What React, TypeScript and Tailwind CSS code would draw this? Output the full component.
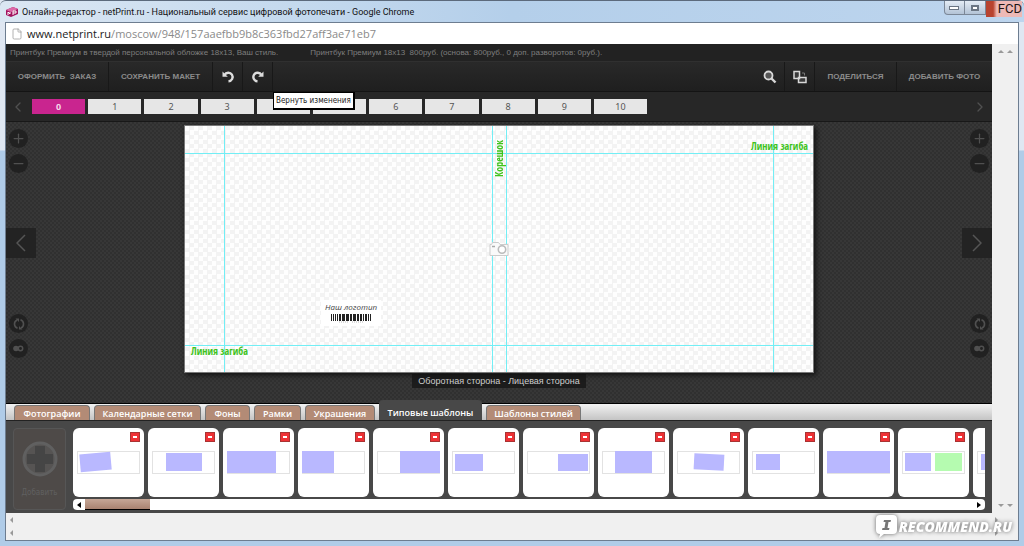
import { ChevronLeft, ChevronRight, Plus, Minus, File } from "lucide-react";
import clsx from "clsx";

const pages = Array.from({ length: 11 }, (_, i) => i);

const tabs = [
  { label: "Фотографии", width: "w-[76px]" },
  { label: "Календарные сетки", width: "w-[107px]" },
  { label: "Фоны", width: "w-[45px]" },
  { label: "Рамки", width: "w-[47px]" },
  { label: "Украшения", width: "w-[70px]" },
  { label: "Типовые шаблоны", width: "w-[103px]", active: true },
  { label: "Шаблоны стилей", width: "w-[95px]" },
];

type Block = { x: number; y: number; w: number; h: number; rotate?: number; color?: string };

const templates: Block[][] = [
  [{ x: 3, y: 2, w: 31, h: 18, rotate: -5 }],
  [{ x: 14, y: 2, w: 36, h: 18 }],
  [{ x: 0, y: 0, w: 49, h: 22 }],
  [{ x: 0, y: 0, w: 32, h: 22 }],
  [{ x: 23, y: 0, w: 40, h: 22 }],
  [{ x: 3, y: 3, w: 28, h: 17 }],
  [{ x: 31, y: 3, w: 30, h: 17 }],
  [{ x: 13, y: 0, w: 37, h: 22 }],
  [{ x: 17, y: 3, w: 30, h: 16, rotate: 3 }],
  [{ x: 4, y: 3, w: 24, h: 16 }],
  [{ x: 0, y: 0, w: 63, h: 22 }],
  [
    { x: 3, y: 2, w: 26, h: 18 },
    { x: 33, y: 2, w: 27, h: 18, color: "#b5fbb0" },
  ],
  [{ x: 4, y: 3, w: 26, h: 16 }],
];

function TitleBar() {
  return (
    <header className="flex h-[22px] items-center justify-between rounded-t-md border-t border-[#5c6a7c] bg-linear-to-r from-[#dbe7f3] via-[#b4cfea] to-[#bdd5ee] pl-1.5">
      <div className="flex items-center gap-1">
        <svg width="12" height="13" viewBox="0 0 12 13">
          <path d="M0 5 7 2l5 2v5l-7 3-5-2z" fill="#a3145f" />
          <path d="M0 5 7 2l5 2-7 3z" fill="#dd6aa8" />
          <path d="M2 10V7l2 2V7M7 10V6h3v2H7" stroke="#fff" strokeWidth="1" fill="none" />
        </svg>
        <h1 className="font-['Roboto',sans-serif] text-[9px] leading-4 whitespace-nowrap text-[#111]">
          Онлайн-редактор - netPrint.ru - Национальный сервис цифровой фотопечати - Google Chrome
        </h1>
      </div>
      <div className="flex h-full items-start pr-0.5">
        <button aria-label="Свернуть" className="flex h-3.5 w-[21px] items-center justify-center rounded-bl border border-t-0 border-[#7b8797] bg-linear-to-b from-[#e4ecf5] to-[#b3c3d6]">
          <span className="h-1 w-2.5 border border-[#6b7684] bg-white" />
        </button>
        <button aria-label="Развернуть" className="flex h-3.5 w-[21px] items-center justify-center border-r border-b border-[#7b8797] bg-linear-to-b from-[#e4ecf5] to-[#b3c3d6]">
          <span className="h-1.5 w-2 border-2 border-[#6b7684] bg-white" />
        </button>
        <button aria-label="Закрыть" className="flex h-4 items-start bg-linear-to-r from-[#b8432f] from-20% to-[#edb9b6] to-30% pl-3 font-['Roboto',sans-serif] text-[13px] leading-4 text-[#1c1414]">
          FCD
        </button>
      </div>
    </header>
  );
}

function UndoIcon({ flip = false }: { flip?: boolean }) {
  return (
    <svg width="14" height="14" viewBox="0 0 14 14" className={clsx(flip && "-scale-x-100")}>
      <path d="M3.500 5A4.300 4.300 0 1 1 7.500 11.300" stroke="#dcdcdc" strokeWidth="2.400" fill="none" />
      <path d="M1.500 1.500v5.300h5.300z" fill="#dcdcdc" />
    </svg>
  );
}

function ToolButton({ children, className, label }: { children: React.ReactNode; className?: string; label?: string }) {
  return (
    <button
      aria-label={label}
      className={clsx("flex h-full items-center justify-center border-[#181818] text-[8px] font-bold whitespace-pre text-[#8b8b8b]", className)}
    >
      {children}
    </button>
  );
}

function Toolbar() {
  return (
    <nav className="flex h-[31px] justify-between border-y border-t-[#303030] border-b-[#141414] bg-linear-to-b from-[#292929] to-[#1f1f1f]">
      <div className="flex">
        <ToolButton className="w-[103px] border-r">ОФОРМИТЬ  ЗАКАЗ</ToolButton>
        <ToolButton className="w-[104px] border-r">СОХРАНИТЬ МАКЕТ</ToolButton>
        <ToolButton label="Отменить изменения" className="w-[30px] border-r"><UndoIcon /></ToolButton>
        <div className="relative">
          <ToolButton label="Вернуть изменения" className="w-[30px] border-r"><UndoIcon flip /></ToolButton>
          <div role="tooltip" className="absolute top-[30px] left-[30px] z-20 border border-r-2 border-b-2 border-black bg-white px-0.5 font-['DejaVu_Sans_Condensed','DejaVu_Sans',sans-serif] text-[8px] leading-[15px] whitespace-nowrap text-[#222]">
            Вернуть изменения
          </div>
        </div>
      </div>
      <div className="flex">
        <ToolButton label="Поиск" className="w-[30px] border-r">
          <svg width="14" height="14" viewBox="0 0 14 14">
            <circle cx="5.500" cy="5.500" r="4" fill="#555" stroke="#d8d8d8" strokeWidth="1.800" />
            <path d="m8.500 8.500 4 4" stroke="#d8d8d8" strokeWidth="2.400" />
          </svg>
        </ToolButton>
        <ToolButton label="Размер" className="w-[30px] border-r">
          <svg width="14" height="14" viewBox="0 0 14 14" fill="#3a3a3a" stroke="#d8d8d8" strokeWidth="1.500">
            <path d="M1 1.500h5.500v7H1zM5.500 7.500h7.500v5H5.500z" />
            <path d="M9 3h2.500v2.500" fill="none" stroke="#777" strokeWidth="1" />
          </svg>
        </ToolButton>
        <ToolButton className="w-[82px] border-r">ПОДЕЛИТЬСЯ</ToolButton>
        <ToolButton className="w-[95px]">ДОБАВИТЬ ФОТО</ToolButton>
      </div>
    </nav>
  );
}

function PageStrip() {
  return (
    <div className="flex h-[30px] items-center justify-between border-b border-[#181818] bg-[#272727] px-1">
      <div className="flex flex-1 items-center gap-1.5">
        <button aria-label="Назад"><ChevronLeft size={16} color="#505050" strokeWidth={2} /></button>
        <div className="flex max-w-[615px] flex-1 gap-[3px]">
          {pages.map((page) => (
            <button
              key={page}
              className={clsx(
                "h-[15px] flex-1 font-['Noto_Sans',sans-serif] text-[9px] leading-[15px]",
                page === 0 ? "bg-[#c9258f] font-bold text-[#f5d5e9]" : "bg-[#e6e6e6] text-[#555]"
              )}
            >
              {page}
            </button>
          ))}
        </div>
      </div>
      <button aria-label="Вперёд"><ChevronRight size={16} color="#505050" strokeWidth={2} /></button>
    </div>
  );
}

const round = "flex size-[19px] items-center justify-center rounded-full bg-[#212121] text-[#505050]";

function SideControls({ side }: { side: "left" | "right" }) {
  const right = side === "right";
  return (
    <div className={clsx("flex w-[30px] flex-col pt-[7px] pb-[45px]", right ? "items-end" : "items-start")}>
      <div className={clsx("flex flex-col gap-1.5", right ? "pr-[3px]" : "pl-[3px]")}>
        <button aria-label="Увеличить" className={round}><Plus size={15} strokeWidth={2} /></button>
        <button aria-label="Уменьшить" className={round}><Minus size={15} strokeWidth={2} /></button>
      </div>
      <button aria-label={right ? "Следующий разворот" : "Предыдущий разворот"} className="mt-[55px] flex size-[30px] items-center justify-center bg-[#232323] text-[#555]">
        <svg width="10" height="18" viewBox="0 0 10 18" className={clsx(right && "-scale-x-100")}>
          <path d="M9 1 1 9l8 8" stroke="currentColor" strokeWidth="1.500" fill="none" />
        </svg>
      </button>
      <div className={clsx("mt-auto flex flex-col gap-1.5", right ? "pr-[3px]" : "pl-[3px]")}>
        <button aria-label="Повернуть" className={round}>
          <svg width="12" height="12" viewBox="0 0 12 12">
            <path d="M4.500 10.300A4.500 4.500 0 0 1 4 2M7.500 1.700A4.500 4.500 0 0 1 8 10" stroke="currentColor" strokeWidth="1.600" fill="none" />
            <path d="M2.500 0.500h3.500v3.500zM9.500 11.500H6V8z" fill="currentColor" />
          </svg>
        </button>
        <button aria-label="Переключить" className={round}>
          <svg width="11" height="7" viewBox="0 0 11 7">
            <circle cx="3" cy="3.500" r="2.800" fill="currentColor" />
            <circle cx="7.500" cy="3.500" r="2.200" fill="none" stroke="currentColor" strokeWidth="1.500" />
          </svg>
        </button>
      </div>
    </div>
  );
}

const guide = "absolute border-[#72eef5]";
const greenText = "absolute font-['Liberation_Sans_Narrow','Open_Sans_Condensed','Roboto_Condensed','Roboto',sans-serif] text-[10px] leading-3 font-bold whitespace-nowrap text-[#3fc31c]";

function Spread() {
  return (
    <div className="relative h-[248px] w-[630px] border border-[#777] bg-[#fefefe] bg-[repeating-conic-gradient(#f3f3f3_0_25%,#fefefe_0_50%)] bg-size-[9px_9px] shadow-[2px_2px_5px_#111]">
      <div className={clsx(guide, "inset-x-0 top-[27px] bottom-[26px] border-y")} />
      <div className={clsx(guide, "inset-y-0 right-[39px] left-[39px] border-x")} />
      <div className={clsx(guide, "inset-y-0 left-[307px] w-[15px] border-x")} />
      <span className={clsx(greenText, "top-3.5 right-[5px]")}>Линия загиба</span>
      <span className={clsx(greenText, "bottom-[15px] left-1.5")}>Линия загиба</span>
      <span className={clsx(greenText, "top-3.5 left-[308px] rotate-180 [writing-mode:vertical-rl]")}>Корешок</span>
      <svg width="20" height="16" viewBox="0 0 20 16" className="absolute top-[115px] left-[304px]">
        <path d="M1 3.500h1.500l1-2h6l1.500 2h8v11H1z" fill="#fafafa" stroke="#ccc" />
        <path d="M3 5.500h3" stroke="#aaa" strokeWidth="1.500" />
        <circle cx="13" cy="8.500" r="3.700" fill="#fff" stroke="#bbb" strokeWidth="1.600" />
      </svg>
      <div className="absolute top-[174px] left-[136px] flex flex-col items-center bg-white px-1 font-['Open_Sans',sans-serif] text-[8px] leading-[14px] text-[#444] italic">
        Наш логотип
        <svg width="40" height="9" viewBox="0 0 40 9" className="mb-[3px]">
          {[0, 2, 4, 6, 8, 9, 11, 12, 13, 15, 16, 17, 19, 20, 22, 23, 24, 26, 27, 29, 30, 32, 34, 35, 37, 39].map((x) => (
            <rect key={x} x={x} width="1" height="7" fill="#222" />
          ))}
          <path d="M8 8h10M21 8h11" stroke="#bbb" strokeWidth="1" strokeDasharray="1 1" />
        </svg>
      </div>
    </div>
  );
}

function Workspace() {
  return (
    <main className="flex flex-1 justify-between bg-[#333] bg-[repeating-conic-gradient(#303030_0_25%,#373737_0_50%)] bg-size-[4px_4px]">
      <SideControls side="left" />
      <div className="flex flex-col items-center pt-[3px]">
        <Spread />
        <p className="mt-px bg-[#1c1c1c] px-1.5 text-[9px] leading-[14px] text-[#cfcfcf]">Оборотная сторона - Лицевая сторона</p>
      </div>
      <SideControls side="right" />
    </main>
  );
}

function TemplateTabs() {
  return (
    <div role="tablist" className="flex h-[17px] items-end gap-1 border-t border-black bg-linear-to-b from-[#f2f2f2] to-[#c4c4c4] pl-2 font-['Open_Sans',sans-serif] text-[9px] leading-[15px] font-semibold text-white">
      {tabs.map((tab) => (
        <button
          key={tab.label}
          role="tab"
          aria-selected={!!tab.active}
          className={clsx(
            "shrink-0 rounded-t border-x whitespace-nowrap",
            tab.width,
            tab.active ? "h-5 border-[#484848] bg-[#484848] pt-1" : "h-[15px] border-t border-[#777] bg-[#b38b76]"
          )}
        >
          {tab.label}
        </button>
      ))}
    </div>
  );
}

function TemplateCard({ blocks }: { blocks: Block[] }) {
  return (
    <article className="flex h-[69px] w-[71px] shrink-0 flex-col rounded-md bg-white px-1 pt-1">
      <button aria-label="Удалить шаблон" className="flex size-2.5 items-center justify-center self-end border border-[#a33] bg-[#ee3135]">
        <span className="h-0.5 w-1 bg-white" />
      </button>
      <svg width="63" height="23" viewBox="0 0 63 23" className="mt-[9px]">
        <rect x="0.500" y="0.500" width="62" height="22" fill="none" stroke="#e2e2e2" />
        {blocks.map((b, i) => (
          <rect
            key={i}
            x={b.x}
            y={b.y}
            width={b.w}
            height={b.h}
            fill={b.color ?? "#b9b8ff"}
            transform={b.rotate ? `rotate(${b.rotate} ${b.x + b.w / 2} ${b.y + b.h / 2})` : undefined}
          />
        ))}
      </svg>
    </article>
  );
}

function TemplatePanel() {
  return (
    <section className="flex h-[93px] gap-[7px] border-t border-[#222] bg-[#484848] px-[7px] pt-[7px]">
      <button className="flex h-[82px] w-[53px] shrink-0 flex-col items-center rounded border border-[#565656] bg-[#4e4a48] pt-3 font-['DejaVu_Sans_Condensed','DejaVu_Sans',sans-serif] text-[8px] leading-3 text-[#606060]">
        <svg width="36" height="36" viewBox="0 0 36 36">
          <circle cx="18" cy="18" r="16" stroke="#606060" strokeWidth="3" fill="#565453" />
          <path d="M13 5h10v8h8v10h-8v8H13v-8H5V13h8z" fill="#454545" />
        </svg>
        <span className="mt-2.5">Добавить</span>
      </button>
      <div className="flex min-w-0 flex-1 flex-col gap-0.5">
        <div className="flex gap-1 overflow-hidden">
          {templates.map((blocks, i) => (
            <TemplateCard key={i} blocks={blocks} />
          ))}
        </div>
        <div className="flex h-[11px] items-center justify-between rounded-sm bg-white px-1">
          <div className="flex h-full items-center gap-1">
            <span className="border-y-[3px] border-r-4 border-y-transparent border-r-black" />
            <span className="h-full w-[65px] border-b border-black bg-linear-to-b from-[#c6a797] to-[#a98370]" />
          </div>
          <span className="border-y-[3px] border-l-4 border-y-transparent border-l-black" />
        </div>
      </div>
    </section>
  );
}

function Watermark() {
  return (
    <div className="absolute right-3 bottom-2 flex items-center gap-0.5 drop-shadow-[0_0_2px_#666]">
      <svg width="21" height="23" viewBox="0 0 21 23">
        <path d="M4 0h13a4 4 0 0 1 4 4v11a4 4 0 0 1-4 4h-9l-5 4 1-4a4 4 0 0 1-4-4V4a4 4 0 0 1 4-4z" fill="#fff" />
        <path d="M8 5h7l-.5 2h-2l-1 6h2l-.5 2H6l.5-2h2l1-6h-2z" fill="#777" />
      </svg>
      <span className="font-['Open_Sans',sans-serif] text-[14px] leading-4 font-extrabold text-white italic">RECOMMEND.RU</span>
    </div>
  );
}

export default function App() {
  return (
    <div className="relative flex min-h-screen flex-col bg-linear-to-b from-[#dfe7f2] from-[150px] to-[#b0cce8] to-[151px] font-['Liberation_Sans',Arial,sans-serif]">
      <TitleBar />
      <div className="mr-[5px] mb-[5px] ml-[5px] flex flex-1 flex-col border border-[#6d7d90] bg-[#f0f0f0]">
        <div className="flex h-[21px] items-center gap-1 bg-white pl-[5px]">
          <File size={12} strokeWidth={1.5} color="#999" />
          <p className="font-['Open_Sans',sans-serif] text-[11px] leading-5 text-[#8a8a8a]">
            <span className="text-[#222]">www.netprint.ru</span>/moscow/948/157aaefbb9b8c363fbd27aff3ae71eb7
          </p>
        </div>
        <div className="flex flex-1">
          <div className="flex min-w-0 flex-1 flex-col">
            <div className="flex h-[17px] gap-8 bg-[#222] pl-1 text-[8px] leading-[18px] whitespace-pre text-[#7e7e7e]">
              <span>Принтбук Премиум в твердой персональной обложке 18x13, Ваш стиль.</span>
              <span>Принтбук Премиум 18x13  800руб. (основа: 800руб., 0 доп. разворотов: 0руб.).</span>
            </div>
            <Toolbar />
            <PageStrip />
            <Workspace />
            <TemplateTabs />
            <TemplatePanel />
          </div>
          <div className="flex w-[26px] justify-around px-1 py-1.5">
            {[0, 1].map((i) => (
              <div key={i} className="flex flex-col justify-between">
                <span className="border-x-[3px] border-b-[3px] border-x-transparent border-b-[#999]" />
                <span className="border-x-[3px] border-t-[3px] border-x-transparent border-t-[#999]" />
              </div>
            ))}
          </div>
        </div>
        <div className="flex h-[27px] flex-col justify-around px-1">
          {[0, 1].map((i) => (
            <div key={i} className="flex justify-between pr-4">
              <span className="border-y-[3px] border-r-[3px] border-y-transparent border-r-[#999]" />
              <span className="border-y-[3px] border-l-[3px] border-y-transparent border-l-[#999]" />
            </div>
          ))}
        </div>
      </div>
      <Watermark />
    </div>
  );
}
